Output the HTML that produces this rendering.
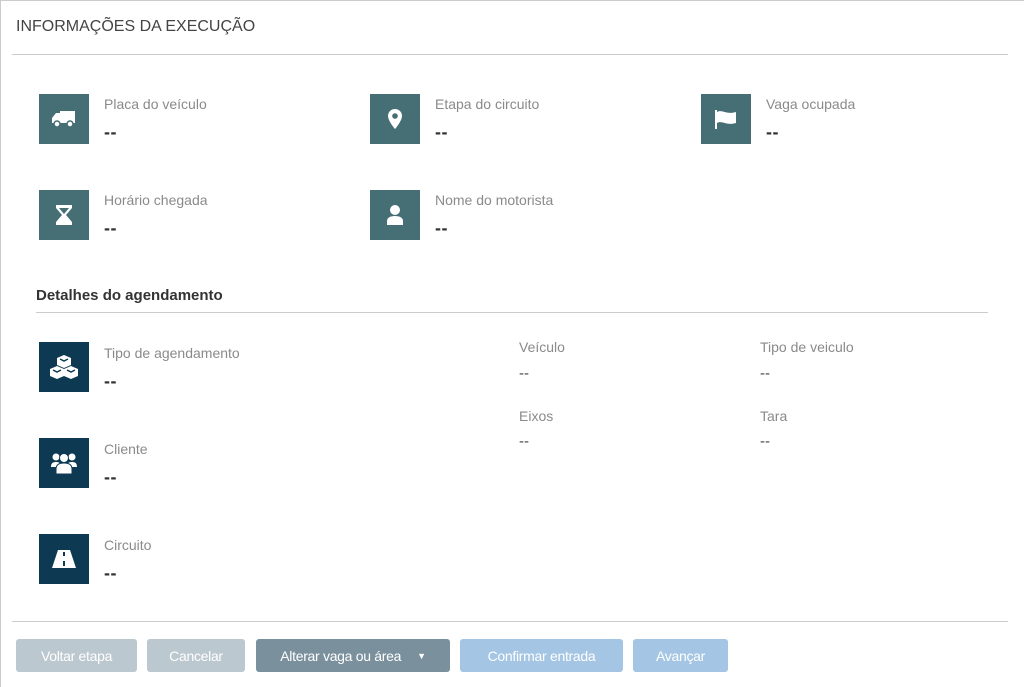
<!DOCTYPE html>
<html><head><meta charset="utf-8"><style>
*{margin:0;padding:0;box-sizing:border-box}
body{width:1024px;height:687px;background:#fff;font-family:"Liberation Sans",sans-serif;position:relative;overflow:hidden}
.a{position:absolute}
.t{left:16px;top:18px;font-size:16px;color:#444}
.hr{height:1px;background:#ccc}
.box{width:50px;height:50px;background:#466e75;display:flex;align-items:center;justify-content:center}
.dk{background:#0d3a52}
.lb{font-size:14px;color:#8a8a8a}
.v{font-size:18px;font-weight:bold;color:#333;letter-spacing:0.5px}
.v2{font-size:15px;color:#444}
.btn{top:639px;height:33px;border-radius:3px;color:#fff;font-size:14px;display:flex;align-items:center;justify-content:center;letter-spacing:-0.3px}
</style></head><body>
<div class="a hr" style="left:0;top:0;width:1024px"></div>
<div class="a" style="left:0;top:0;width:1px;height:687px;background:#ccc"></div>
<div class="a t">INFORMAÇÕES DA EXECUÇÃO</div>
<div class="a hr" style="left:12px;top:54px;width:996px"></div>

<div class="a box" style="left:39px;top:94px"><svg width="26" height="20" viewBox="0 0 26 20"><path d="M9 2h15v12H9z M1 9l4-5h4v10H1z" fill="#fff"/><circle cx="6" cy="15" r="3" fill="#fff" stroke="#466e75" stroke-width="1.5"/><circle cx="19" cy="15" r="3" fill="#fff" stroke="#466e75" stroke-width="1.5"/></svg></div>
<div class="a lb" style="left:104px;top:96px">Placa do veículo</div>
<div class="a v" style="left:104px;top:122px">--</div>

<div class="a box" style="left:370px;top:94px"><svg width="16" height="22" viewBox="0 0 16 22"><path d="M8 1a7 7 0 0 0-7 7c0 5 7 13 7 13s7-8 7-13a7 7 0 0 0-7-7z" fill="#fff"/><circle cx="8" cy="8" r="2.8" fill="#466e75"/></svg></div>
<div class="a lb" style="left:435px;top:96px">Etapa do circuito</div>
<div class="a v" style="left:435px;top:122px">--</div>

<div class="a box" style="left:701px;top:94px"><svg width="26" height="22" viewBox="0 0 26 22"><rect x="2" y="2" width="2" height="19" fill="#fff"/><path d="M4 4c5-3 9 3 19 0v11c-10 3-14-3-19 0z" fill="#fff"/></svg></div>
<div class="a lb" style="left:766px;top:96px">Vaga ocupada</div>
<div class="a v" style="left:766px;top:122px">--</div>

<div class="a box" style="left:39px;top:190px"><svg width="20" height="24" viewBox="0 0 20 24"><path d="M2 2h16v3l-6 7 6 7v3H2v-3l6-7-6-7z" fill="#fff"/><path d="M5 5h10l-5 6z" fill="#466e75"/></svg></div>
<div class="a lb" style="left:104px;top:192px">Horário chegada</div>
<div class="a v" style="left:104px;top:218px">--</div>

<div class="a box" style="left:370px;top:190px"><svg width="20" height="22" viewBox="0 0 20 22"><circle cx="10" cy="6" r="5" fill="#fff"/><path d="M2 21v-4c0-3 3-5 8-5s8 2 8 5v4z" fill="#fff"/></svg></div>
<div class="a lb" style="left:435px;top:192px">Nome do motorista</div>
<div class="a v" style="left:435px;top:218px">--</div>

<div class="a" style="left:36px;top:287px;font-size:15px;font-weight:bold;color:#333">Detalhes do agendamento</div>
<div class="a hr" style="left:36px;top:312px;width:952px"></div>

<div class="a box dk" style="left:39px;top:342px"><svg width="30" height="26" viewBox="0 0 30 26"><path d="M15 1l7 3v7l-7 3-7-3V4z M8 12l7 3v7l-7 3-7-3v-7z M22 12l7 3v7l-7 3-7-3v-7z" fill="#fff"/><path d="M11 5l4 2 4-2 M4 16l4 2 4-2 M18 16l4 2 4-2" stroke="#0d3a52" stroke-width="1.5" fill="none"/></svg></div>
<div class="a lb" style="left:104px;top:345px">Tipo de agendamento</div>
<div class="a v" style="left:104px;top:371px">--</div>

<div class="a box dk" style="left:39px;top:438px"><svg width="28" height="24" viewBox="0 0 28 24"><circle cx="6" cy="6" r="3.5" fill="#fff"/><circle cx="22" cy="6" r="3.5" fill="#fff"/><circle cx="14" cy="7" r="4.5" fill="#fff" stroke="#0d3a52"/><path d="M1 16c0-4 2-5 5-5s5 1 5 5z M17 16c0-4 2-5 5-5s5 1 5 5z" fill="#fff"/><path d="M6 23v-5c0-4 3-6 8-6s8 2 8 6v5z" fill="#fff" stroke="#0d3a52"/></svg></div>
<div class="a lb" style="left:104px;top:441px">Cliente</div>
<div class="a v" style="left:104px;top:467px">--</div>

<div class="a box dk" style="left:39px;top:534px"><svg width="26" height="20" viewBox="0 0 26 20"><path d="M7 1h12l6 18H1z" fill="#fff"/><rect x="12" y="3" width="2" height="4" fill="#0d3a52"/><rect x="12" y="12" width="2" height="5" fill="#0d3a52"/></svg></div>
<div class="a lb" style="left:104px;top:537px">Circuito</div>
<div class="a v" style="left:104px;top:563px">--</div>

<div class="a lb" style="left:519px;top:339px">Veículo</div>
<div class="a v2" style="left:519px;top:365px">--</div>
<div class="a lb" style="left:760px;top:339px">Tipo de veiculo</div>
<div class="a v2" style="left:760px;top:365px">--</div>
<div class="a lb" style="left:519px;top:408px">Eixos</div>
<div class="a v2" style="left:519px;top:433px">--</div>
<div class="a lb" style="left:760px;top:408px">Tara</div>
<div class="a v2" style="left:760px;top:433px">--</div>

<div class="a hr" style="left:12px;top:621px;width:996px"></div>
<div class="a btn" style="left:16px;width:121px;background:#bcc8cf">Voltar etapa</div>
<div class="a btn" style="left:147px;width:98px;background:#bcc8cf">Cancelar</div>
<div class="a btn" style="left:256px;width:194px;background:#7a909d">Alterar vaga ou área<span style="margin-left:16px;font-size:9px">▼</span></div>
<div class="a btn" style="left:460px;width:163px;background:#a4c5e3">Confirmar entrada</div>
<div class="a btn" style="left:633px;width:95px;background:#a4c5e3">Avançar</div>
</body></html>
